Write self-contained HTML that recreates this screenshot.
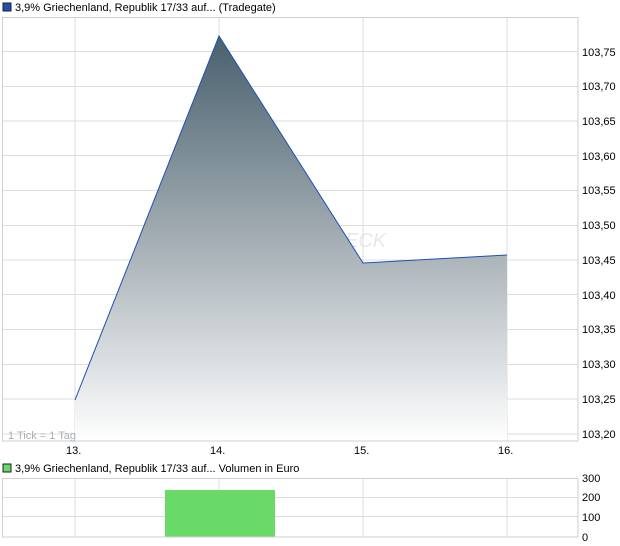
<!DOCTYPE html>
<html><head><meta charset="utf-8"><style>
html,body{margin:0;padding:0;background:#fff;width:620px;height:546px;overflow:hidden}
svg{display:block;font-family:"Liberation Sans",sans-serif}
</style></head><body>
<svg width="620" height="546" viewBox="0 0 620 546" xmlns="http://www.w3.org/2000/svg">
<defs>
<linearGradient id="g" x1="0" y1="36" x2="0" y2="441" gradientUnits="userSpaceOnUse">
<stop offset="0" stop-color="#48606d"/>
<stop offset="0.5" stop-color="#a3adb3"/>
<stop offset="1" stop-color="#ffffff"/>
</linearGradient>
</defs>
<rect x="3" y="3" width="8" height="8" fill="#1f4fb4" stroke="#222" stroke-width="1"/>
<text x="15" y="11" font-size="11" fill="#000">3,9% Griechenland, Republik 17/33 auf... (Tradegate)</text>
<g stroke="#dcdcdc" stroke-width="1">
<line x1="2" y1="51.5" x2="578" y2="51.5"/><line x1="2" y1="86.5" x2="578" y2="86.5"/>
<line x1="2" y1="121" x2="578" y2="121"/><line x1="2" y1="155.5" x2="578" y2="155.5"/>
<line x1="2" y1="190.5" x2="578" y2="190.5"/><line x1="2" y1="225.5" x2="578" y2="225.5"/>
<line x1="2" y1="260" x2="578" y2="260"/><line x1="2" y1="294.5" x2="578" y2="294.5"/>
<line x1="2" y1="329.5" x2="578" y2="329.5"/><line x1="2" y1="364.5" x2="578" y2="364.5"/>
<line x1="2" y1="399" x2="578" y2="399"/><line x1="2" y1="434" x2="578" y2="434"/>
<line x1="75" y1="17" x2="75" y2="441"/><line x1="219" y1="17" x2="219" y2="441"/>
<line x1="363" y1="17" x2="363" y2="441"/><line x1="507" y1="17" x2="507" y2="441"/>
</g>
<text x="345" y="247" font-size="20" font-style="italic" fill="#d6dadd" opacity="0.6">ECK</text>
<polygon points="75,400 219,36 363,263 507,255 507,441 75,441" fill="url(#g)"/>
<polyline points="75,400 219,36 363,263 507,255" fill="none" stroke="#1f4fb4" stroke-width="1"/>
<rect x="2.5" y="17.5" width="575.5" height="423.5" fill="none" stroke="#cfcfcf"/>
<text x="8" y="439" font-size="11" fill="#a8b0b8">1 Tick = 1 Tag</text>
<g font-size="11" fill="#000">
<text x="582" y="56">103,75</text><text x="582" y="90">103,70</text>
<text x="582" y="125">103,65</text><text x="582" y="160">103,60</text>
<text x="582" y="194">103,55</text><text x="582" y="229">103,50</text>
<text x="582" y="264">103,45</text><text x="582" y="299">103,40</text>
<text x="582" y="333">103,35</text><text x="582" y="368">103,30</text>
<text x="582" y="403">103,25</text><text x="582" y="438">103,20</text>
<text x="66" y="454">13.</text><text x="210" y="454">14.</text>
<text x="354" y="454">15.</text><text x="498" y="454">16.</text>
</g>
<rect x="3" y="464" width="8" height="8" fill="#66d966" stroke="#222" stroke-width="1"/>
<text x="15" y="472" font-size="11" fill="#000">3,9% Griechenland, Republik 17/33 auf... Volumen in Euro</text>
<g stroke="#dcdcdc" stroke-width="1">
<line x1="2" y1="497.5" x2="578" y2="497.5"/><line x1="2" y1="516.5" x2="578" y2="516.5"/>
<line x1="75" y1="478" x2="75" y2="537"/><line x1="219" y1="478" x2="219" y2="537"/>
<line x1="363" y1="478" x2="363" y2="537"/><line x1="507" y1="478" x2="507" y2="537"/>
</g>
<rect x="165" y="490" width="110" height="47" fill="#68da68"/>
<rect x="2.5" y="478.5" width="575.5" height="58.5" fill="none" stroke="#cfcfcf"/>
<g font-size="11" fill="#000">
<text x="582" y="482">300</text><text x="582" y="501">200</text>
<text x="582" y="521">100</text><text x="582" y="541">0</text>
</g>
</svg>
</body></html>
